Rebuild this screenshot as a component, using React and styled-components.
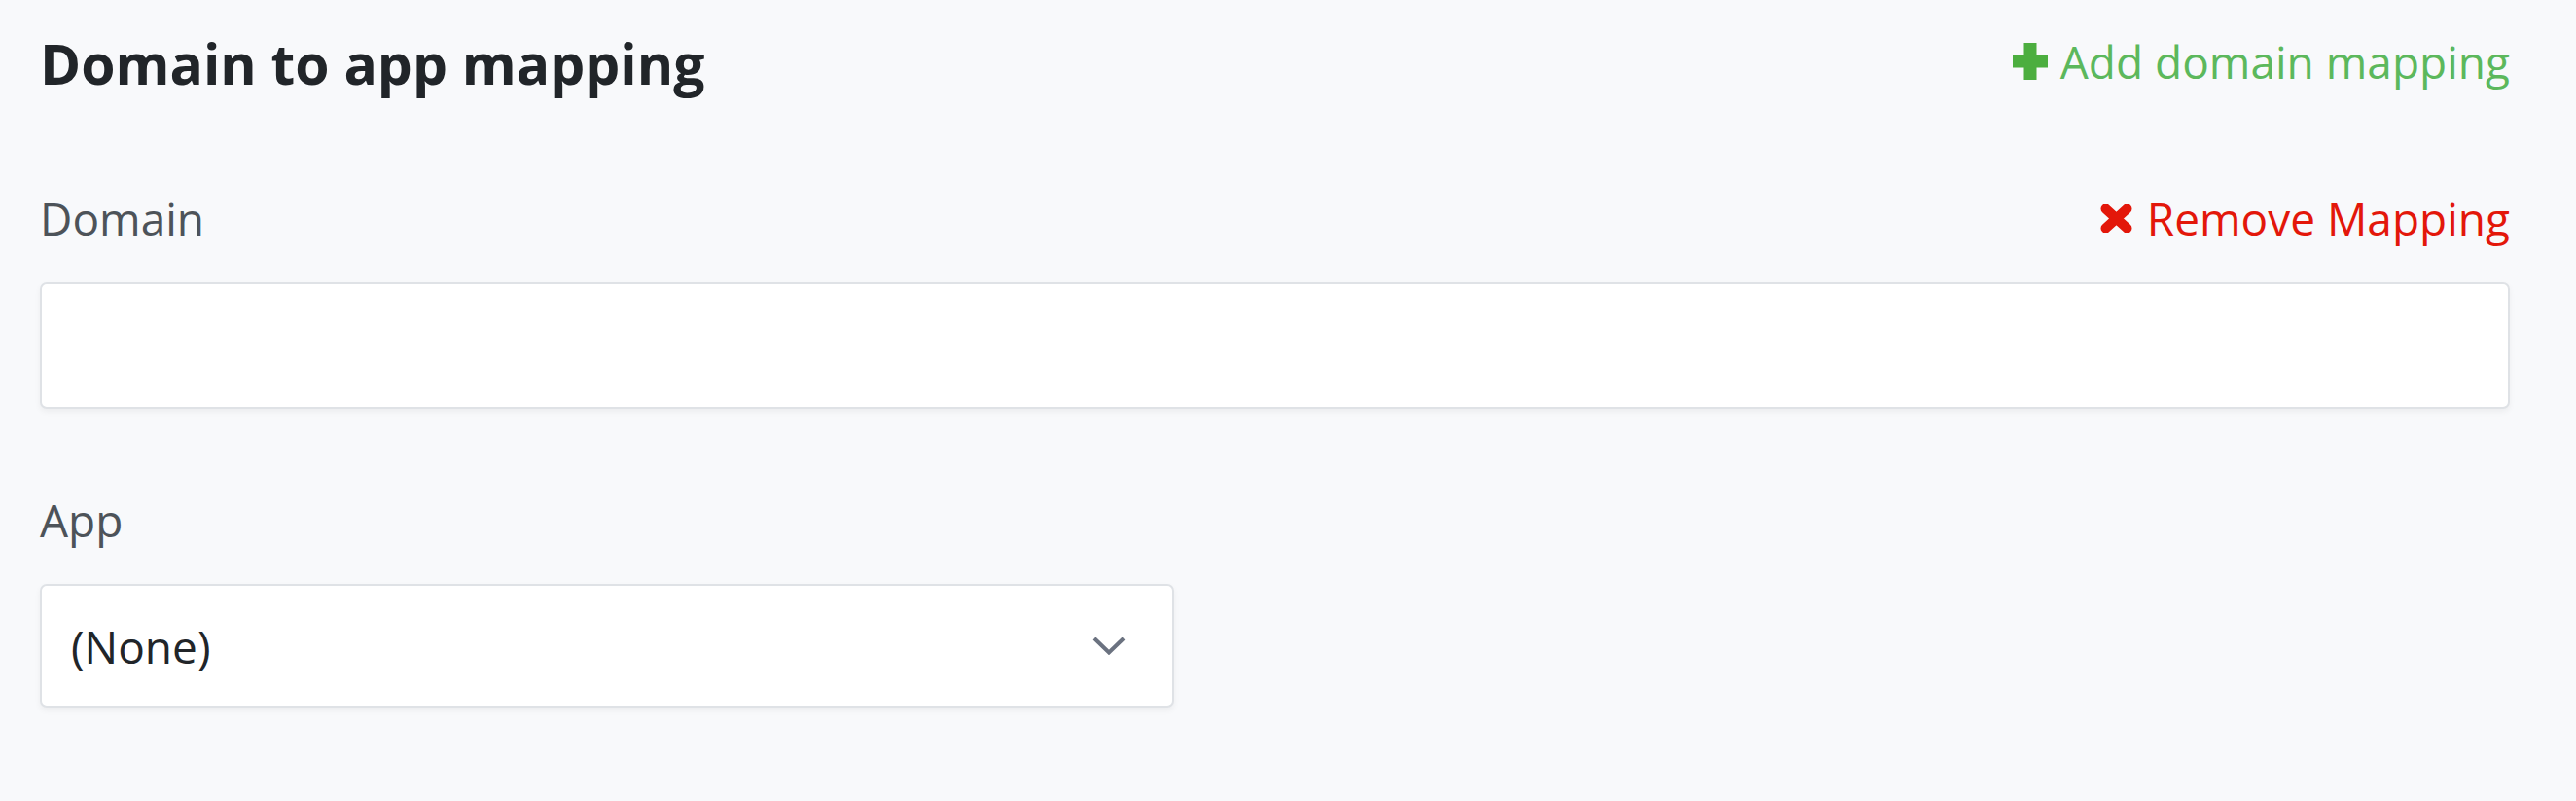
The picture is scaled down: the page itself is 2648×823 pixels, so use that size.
import React from 'react';
import styled, { createGlobalStyle } from 'styled-components';

const GlobalStyle = createGlobalStyle`
    html, body {
        margin: 0;
        padding: 0;
        background: #f8f9fb;
        font-family: "Open Sans", "Noto Sans", sans-serif;
    }
`

const PlusIcon = () => (
    <svg width="36" height="38" viewBox="0 0 36 38">
        <rect x="11.5" y="0" width="13" height="38" fill="#4cae3f" />
        <rect x="0" y="12.5" width="36" height="13" fill="#4cae3f" />
    </svg>
)

const CrossIcon = () => (
    <svg width="33" height="29" viewBox="0 0 33 29">
        <path d="M5.5 4.5 L27.5 24.5 M27.5 4.5 L5.5 24.5" stroke="#e3170a" strokeWidth="10" strokeLinecap="round" />
    </svg>
)

const Chevron = () => (
    <svg width="34" height="19" viewBox="0 0 34 19">
        <path d="M2 2 L17 16.5 L32 2" fill="none" stroke="#6b7280" strokeWidth="4" />
    </svg>
)

const App = () => {
    return (
        <Page>
            <GlobalStyle />
            <Header>
                <Title>Domain to app mapping</Title>
                <AddLink href="#">
                    <PlusIcon />
                    <span>Add domain mapping</span>
                </AddLink>
            </Header>

            <Field>
                <LabelRow>
                    <Label htmlFor="domain">Domain</Label>
                    <RemoveLink href="#">
                        <CrossIcon />
                        <span>Remove Mapping</span>
                    </RemoveLink>
                </LabelRow>
                <TextInput id="domain" type="text" />
            </Field>

            <Field>
                <LabelRow>
                    <Label>App</Label>
                </LabelRow>
                <SelectBox type="button">
                    <span>(None)</span>
                    <Chevron />
                </SelectBox>
            </Field>
        </Page>
    )
}

const Page = styled.div`
    min-height: 100vh;
    box-sizing: border-box;
    padding: 24px 68px 0 41px;
`

const Header = styled.div`
    display: flex;
    justify-content: space-between;
    align-items: center;
    height: 82px;
    margin-bottom: 87px;
`

const Title = styled.h2`
    margin: 0;
    font-size: 57px;
    line-height: 82px;
    font-weight: 700;
    color: #212529;
`

const AddLink = styled.a`
    display: flex;
    align-items: center;
    gap: 13px;
    margin-bottom: 4px;
    font-size: 46px;
    line-height: 62px;
    color: #5cb85c;
    text-decoration: none;
`

const Field = styled.div`
    display: flex;
    flex-direction: column;

    & + & {
        margin-top: 83px;
    }
`

const LabelRow = styled.div`
    display: flex;
    justify-content: space-between;
    align-items: center;
    height: 62px;
    margin-bottom: 35px;
`

const Label = styled.label`
    font-size: 46px;
    line-height: 62px;
    color: #4d5359;
`

const RemoveLink = styled.a`
    display: flex;
    align-items: center;
    gap: 15px;
    font-size: 46px;
    line-height: 62px;
    color: #e3170a;
    text-decoration: none;
`

const TextInput = styled.input`
    display: block;
    box-sizing: border-box;
    width: 100%;
    height: 130px;
    margin: 0;
    padding: 0 30px;
    border: 2px solid #dfe2e6;
    border-radius: 7px;
    background: #fff;
    box-shadow: 0 3px 6px rgba(0, 0, 0, 0.05);
    font-family: "Open Sans", sans-serif;
    font-size: 46px;
    outline: none;
`

const SelectBox = styled.button`
    display: flex;
    align-items: center;
    justify-content: space-between;
    box-sizing: border-box;
    width: 1166px;
    height: 127px;
    margin: 0;
    padding: 0 48px 0 30px;
    border: 2px solid #dfe2e6;
    border-radius: 7px;
    background: #fff;
    box-shadow: 0 3px 6px rgba(0, 0, 0, 0.05);
    font-family: "Open Sans", sans-serif;
    font-size: 46px;
    line-height: 62px;
    color: #212529;
    text-align: left;
    cursor: pointer;
`

export default App
